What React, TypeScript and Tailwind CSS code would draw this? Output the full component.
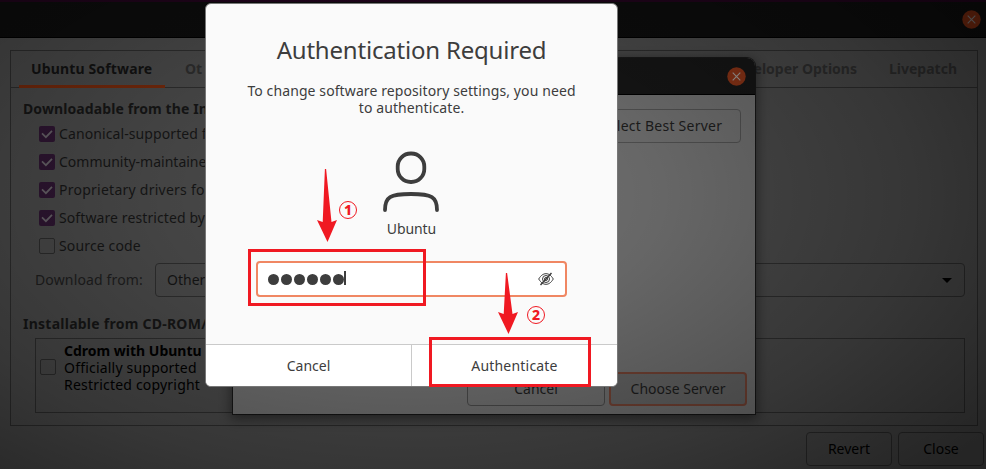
import React from 'react';

function CloseDot({ fill, stroke }: { fill: string; stroke: string }) {
  return (
    <svg className="size-[19px] shrink-0" viewBox="0 0 19 19">
      <circle cx="9.5" cy="9.5" r="9.2" fill={fill} />
      <path d="M5.7 5.7l7.6 7.6M13.3 5.700l-7.600 7.600" stroke={stroke} strokeWidth="1.1" />
    </svg>
  );
}

function Box({ on = false }: { on?: boolean }) {
  return on ? (
    <svg className="size-4 shrink-0" viewBox="0 0 16 16">
      <rect width="16" height="16" rx="2" fill="#311735" />
      <path d="M3 7.4l3.9 3.8L13 4.8" fill="none" stroke="#6d686e" strokeWidth="1.7" />
    </svg>
  ) : (
    <span className="size-4 shrink-0 rounded-[2px] border border-[#2f2f2f]" />
  );
}

function Arrow({ className, height }: { className: string; height: number }) {
  const neck = height - 20;
  const wing = height - 22;
  return (
    <svg className={className} width="20" height={height} viewBox={`0 0 20 ${height}`}>
      <path d={`M7.900 0H9.100L14.500 ${neck} 20 ${wing} 10.500 ${height} 0 ${wing} 5.700 ${neck}z`} fill="#f01922" />
    </svg>
  );
}

function Badge({ n, className }: { n: string; className: string }) {
  return (
    <span className={`${className} absolute flex size-[18px] items-center justify-center rounded-full border-[1.5px] border-[#f01922] text-[14px] leading-none font-extrabold text-[#f01922]`}>
      {n}
    </span>
  );
}

const sources = [
  ['Canonical-supported f', 'tracking-[0.1px]'],
  ['Community-maintaine', 'tracking-[0px]'],
  ['Proprietary drivers fo', 'tracking-[0.25px]'],
  ['Software restricted by', 'tracking-[0.1px]'],
];

function SettingsWindow() {
  return (
    <div className="flex h-[469px] flex-col bg-[#4d4d4d] text-[#171717]">
      <div className="h-[2px] shrink-0 bg-[#22041d]" />
      <header className="flex h-9 shrink-0 items-center justify-end border-b border-black bg-[#0d0d0d] pr-[5px] pb-px">
        <CloseDot fill="#7e2c10" stroke="#858080" />
      </header>
      <main className="mt-3 mr-2 ml-[10px] h-[376px] shrink-0 border border-[#303030] pt-px">
        <nav className="flex h-[36px] justify-between border-b border-[#303030] pr-[20px] pl-2 font-bold text-[#303030]">
          <div className="flex">
            <span className="h-[36px] w-[146px] border-b-3 border-[#7a2b0c] pt-[7px] pl-3 tracking-[0.15px] text-[#131313]">Ubuntu Software</span>
            <span className="pt-[7px] pl-5">Ot</span>
          </div>
          <div className="flex gap-[32px] pt-[7px]">
            <span>Developer Options</span>
            <span>Livepatch</span>
          </div>
        </nav>
        <h2 className="mt-[11px] ml-3 h-[22px] w-[185px] overflow-hidden font-bold tracking-[0.1px] whitespace-nowrap">Downloadable from the In</h2>
        <div className="-mt-px ml-7">
          {sources.map(([label, tracking]) => (
            <div key={label} className="flex h-7 items-center gap-1 whitespace-nowrap">
              <Box on />
              <span className={tracking}>{label}</span>
            </div>
          ))}
          <div className="flex h-7 items-center gap-1">
            <Box />
            <span className="tracking-[0.15px]">Source code</span>
          </div>
        </div>
        <div className="mt-[3px] mr-3 ml-6 flex h-[34px] items-center text-[#202020]">
          <span className="w-[120px] tracking-[0.15px]">Download from:</span>
          <div className="flex h-[34px] flex-1 items-center justify-between rounded border border-[#303030] pr-3 pl-[11px] text-[#151515]">
            <span>Other</span>
            <span className="border-x-[5px] border-t-[5px] border-x-transparent border-t-black" />
          </div>
        </div>
        <h2 className="mt-[17px] ml-3 h-[22px] font-bold tracking-[0.25px]">Installable from CD-ROM/</h2>
        <div className="mt-[2px] mr-3 ml-6 flex h-[75px] border border-[#303030] pt-[3px] pl-1 text-black">
          <div className="mt-[17px] mr-2 flex">
            <Box />
          </div>
          <div className="leading-[17px]">
            <p className="font-bold">Cdrom with Ubuntu</p>
            <p className="tracking-[0.2px]">Officially supported</p>
            <p className="tracking-[0.2px]">Restricted copyright</p>
          </div>
        </div>
      </main>
      <footer className="mt-[6px] mr-[2px] flex justify-end gap-[6px] text-black">
        <span className="flex h-[34px] w-[86px] items-center justify-center rounded border border-[#303030]">Revert</span>
        <span className="flex h-[34px] w-[86px] items-center justify-center rounded border border-[#303030]">Close</span>
      </footer>
    </div>
  );
}

function ServerDialog() {
  return (
    <section className="absolute top-[58px] left-[233px] flex h-[356px] w-[522px] flex-col rounded-t-lg bg-[#747474] text-[#1e1e1e] shadow-[0_3px_12px_2px_rgba(0,0,0,0.45),0_0_0_1px_#202020]">
      <header className="flex h-[37px] shrink-0 items-center justify-end rounded-t-lg border-b border-black bg-[#161616] pr-[9px]">
        <CloseDot fill="#8f3517" stroke="#aaa39f" />
      </header>
      <div className="flex justify-end pt-[14px] pr-[14px]">
        <span className="flex h-[34px] w-[158px] items-center justify-center rounded border border-[#555] pr-px pl-0 tracking-[0.25px]">Select Best Server</span>
      </div>
      <footer className="mt-auto flex justify-end gap-1 pr-2 pb-2">
        <span className="flex h-[34px] w-[138px] items-center justify-center rounded border border-[#4c4c4c]">Cancel</span>
        <span className="flex h-[34px] w-[138px] items-center justify-center rounded border-2 border-[#784536] bg-[#686868]">Choose Server</span>
      </footer>
    </section>
  );
}

function AuthDialog() {
  return (
    <section className="absolute top-[3px] left-[205px] flex h-[384px] w-[413px] flex-col overflow-hidden rounded-[6px] border border-[#777] bg-[#fafafa] text-center text-[#3d3d3d]">
      <h1 className="mt-[29px] text-[24px] leading-[34px] tracking-[-0.2px]">Authentication Required</h1>
      <p className="mt-[15px] leading-[17px] tracking-[0.1px]">
        To change software repository settings, you need
        <br />
        to authenticate.
      </p>
      <svg className="mr-auto ml-[176px] mt-[35px] h-[62px] w-[58px] shrink-0" viewBox="0 0 58 62" fill="none" stroke="#3d3d3d" strokeWidth="3.800">
        <rect x="15.700" y="2.500" width="26.600" height="28.500" rx="13" />
        <path d="M3 59C3 46 8 43 29 43S55 46 55 59" strokeLinecap="round" />
      </svg>
      <p className="mt-[6px] leading-5 tracking-[-0.1px]">Ubuntu</p>
      <div className="mx-[50px] mt-[22px] flex h-9 shrink-0 items-center rounded border-2 border-[#f08763] bg-white pr-[11px] pl-[10px]">
        <div className="flex gap-[2px]">
          {[0, 1, 2, 3, 4, 5].map((i) => (
            <span key={i} className="size-[11px] rounded-full bg-[#3d3d3d]" />
          ))}
        </div>
        <span className="mb-[2px] h-[14px] w-[2px] bg-[#3d3d3d]" />
        <svg className="ml-auto h-4 w-4" viewBox="0 0 16 16" fill="none" stroke="#3d3d3d" strokeWidth="1">
          <path d="M.7 8C3 4.2 5.3 2.7 8 2.7S13 4.2 15.3 8C13 11.8 10.700 13.300 8 13.300S3 11.800 .7 8z" />
          <circle cx="8" cy="8" r="3.5" />
          <circle cx="8" cy="8" r="1.500" />
          <path d="M2.500 14L13.500 2" strokeWidth="1.500" />
        </svg>
      </div>
      <footer className="mt-auto flex h-[42px] shrink-0 border-t border-[#cacaca] bg-white">
        <span className="flex w-[206px] items-center justify-center border-r border-[#cacaca]">Cancel</span>
        <span className="flex flex-1 items-center justify-center tracking-[0.2px]">Authenticate</span>
      </footer>
    </section>
  );
}

export default function App() {
  return (
    <div className="relative h-[469px] w-[986px] overflow-hidden font-['Noto_Sans','Open_Sans',sans-serif] text-[14px] leading-5">
      <SettingsWindow />
      <ServerDialog />
      <div className="pointer-events-none absolute inset-0 bg-[radial-gradient(ellipse_720px_400px_at_411px_195px,rgba(0,0,0,0)_0%,rgba(0,0,0,.12)_35%,rgba(0,0,0,.3)_70%,rgba(0,0,0,.52)_100%)]" />
      <AuthDialog />
      <div className="absolute top-[249px] left-[248px] h-[57px] w-[178px] border-3 border-[#f01922]" />
      <div className="absolute top-[337px] left-[429px] h-[50px] w-[162px] border-3 border-[#f01922]" />
      <Arrow className="absolute top-[169px] left-[316.5px]" height={73} />
      <Arrow className="absolute top-[273px] left-[497.5px]" height={61} />
      <Badge n="1" className="top-[201px] left-[339px]" />
      <Badge n="2" className="top-[306px] left-[527px]" />
    </div>
  );
}
